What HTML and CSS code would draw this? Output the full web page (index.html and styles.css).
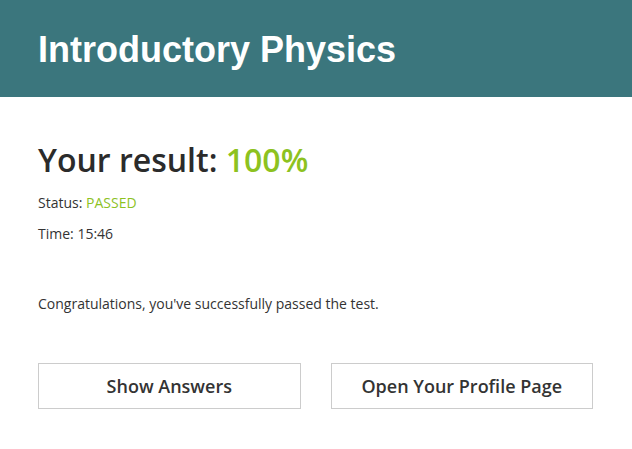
FILE: index.html
```html
<!DOCTYPE html>
<html>
<head>
<meta charset="utf-8">
<link rel="stylesheet" href="styles.css">
</head>
<body>
<header class="header">
  <h1 class="title">Introductory Physics</h1>
</header>
<main class="content">
  <h2 class="result">Your result: <span class="score">100%</span></h2>
  <p class="line first">Status: <span class="passed">PASSED</span></p>
  <p class="line">Time: 15:46</p>
  <p class="message">Congratulations, you've successfully passed the test.</p>
  <div class="actions">
    <button class="btn">Show Answers</button>
    <button class="btn">Open Your Profile Page</button>
  </div>
</main>
</body>
</html>
```
FILE: styles.css
```css
html, body {
  margin: 0;
  padding: 0;
  background: #fff;
}
body {
  font-family: "Open Sans", sans-serif;
  color: #333;
}
.header {
  background: #3b767d;
  height: 97px;
  display: flex;
  align-items: center;
  padding: 0 38px;
}
.title {
  margin: 2px 0 0;
  font-family: "Liberation Sans", Arial, sans-serif;
  font-weight: 700;
  font-size: 36px;
  color: #fff;
}
.content {
  padding: 40px 39px 0 38px;
}
.result {
  margin: 0;
  font-size: 32px;
  font-weight: 600;
  color: #2b2b2b;
  line-height: 46px;
}
.score {
  color: #8dc21f;
}
.line {
  margin: 10px 0 0;
  font-size: 14px;
  line-height: 21px;
}
.line.first {
  margin-top: 9px;
}
.passed {
  color: #8dc21f;
}
.message {
  margin: 49px 0 0;
  font-size: 14px;
  line-height: 21px;
}
.actions {
  display: flex;
  gap: 30px;
  margin-top: 49px;
}
.btn {
  flex: 1;
  height: 46px;
  background: #fff;
  border: 1px solid #ccc;
  font-family: "Open Sans", sans-serif;
  font-weight: 600;
  font-size: 18px;
  color: #333;
  padding: 0;
}
```
